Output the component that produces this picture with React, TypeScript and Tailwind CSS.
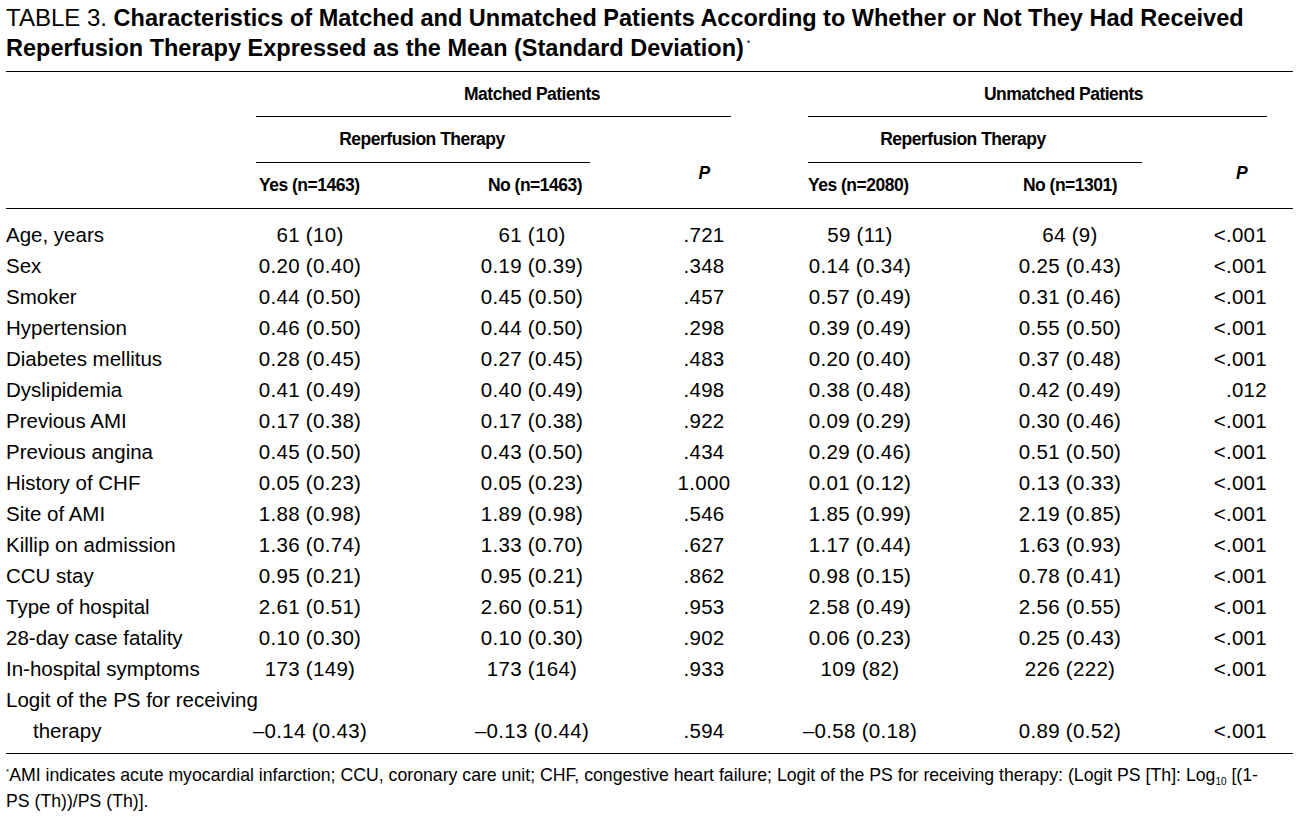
const rows: [string, string, string, string, string, string, string][] = [
  ["Age, years", "61 (10)", "61 (10)", ".721", "59 (11)", "64 (9)", "<.001"],
  ["Sex", "0.20 (0.40)", "0.19 (0.39)", ".348", "0.14 (0.34)", "0.25 (0.43)", "<.001"],
  ["Smoker", "0.44 (0.50)", "0.45 (0.50)", ".457", "0.57 (0.49)", "0.31 (0.46)", "<.001"],
  ["Hypertension", "0.46 (0.50)", "0.44 (0.50)", ".298", "0.39 (0.49)", "0.55 (0.50)", "<.001"],
  ["Diabetes mellitus", "0.28 (0.45)", "0.27 (0.45)", ".483", "0.20 (0.40)", "0.37 (0.48)", "<.001"],
  ["Dyslipidemia", "0.41 (0.49)", "0.40 (0.49)", ".498", "0.38 (0.48)", "0.42 (0.49)", ".012"],
  ["Previous AMI", "0.17 (0.38)", "0.17 (0.38)", ".922", "0.09 (0.29)", "0.30 (0.46)", "<.001"],
  ["Previous angina", "0.45 (0.50)", "0.43 (0.50)", ".434", "0.29 (0.46)", "0.51 (0.50)", "<.001"],
  ["History of CHF", "0.05 (0.23)", "0.05 (0.23)", "1.000", "0.01 (0.12)", "0.13 (0.33)", "<.001"],
  ["Site of AMI", "1.88 (0.98)", "1.89 (0.98)", ".546", "1.85 (0.99)", "2.19 (0.85)", "<.001"],
  ["Killip on admission", "1.36 (0.74)", "1.33 (0.70)", ".627", "1.17 (0.44)", "1.63 (0.93)", "<.001"],
  ["CCU stay", "0.95 (0.21)", "0.95 (0.21)", ".862", "0.98 (0.15)", "0.78 (0.41)", "<.001"],
  ["Type of hospital", "2.61 (0.51)", "2.60 (0.51)", ".953", "2.58 (0.49)", "2.56 (0.55)", "<.001"],
  ["28-day case fatality", "0.10 (0.30)", "0.10 (0.30)", ".902", "0.06 (0.23)", "0.25 (0.43)", "<.001"],
  ["In-hospital symptoms", "173 (149)", "173 (164)", ".933", "109 (82)", "226 (222)", "<.001"],
];

// no condensed face installed, so headers are slightly smaller and tighter
const bold = "font-['Liberation_Sans',Arial,sans-serif] font-bold";
const head = `${bold} text-[17.5px] tracking-[-0.5px]`;
const val = "h-[31px] flex items-center whitespace-nowrap text-[20.5px] tracking-[0.3px]";

function DataRow({ cells, indent }: { cells: string[]; indent?: boolean }) {
  const [label, a, b, p1, c, d, p2] = cells;
  return (
    <>
      <div className={`h-[31px] flex items-center whitespace-nowrap text-[20.5px] ${indent ? "pl-[27px]" : ""}`}>{label}</div>
      <div className={`${val} justify-center pr-[56px]`}>{a}</div>
      <div className={`${val} justify-center pl-[44px]`}>{b}</div>
      <div className={`${val} justify-center`}>{p1}</div>
      <div className={`${val} justify-center pr-[56px]`}>{c}</div>
      <div className={`${val} justify-center pl-[30px]`}>{d}</div>
      <div className={`${val} justify-end pr-[26px]`}>{p2}</div>
    </>
  );
}

export default function App() {
  return (
    <div className="w-[1299px] h-[822px] bg-white text-black px-[6px] font-['Liberation_Sans',Arial,sans-serif] overflow-hidden">
      <div className="pt-[3px] h-[71px] text-[24px] leading-[30px]">
        <span>TABLE 3. </span>
        <span className={`${bold} text-[23.5px]`}>
          Characteristics of Matched and Unmatched Patients According to Whether or Not They Had Received
          Reperfusion Therapy Expressed as the Mean (Standard Deviation)
        </span>
        <span className="relative -top-[10px] ml-[3px] text-[9px]">*</span>
      </div>

      <div className="border-t border-black grid grid-cols-[250px_164px_180px_208px_160px_174px_151px]">
        {/* group headers */}
        <div />
        <div className={`col-span-3 h-[45px] flex flex-col ${head}`}>
          <div className="flex-1 flex items-center justify-center">Matched Patients</div>
          <div className="w-[475px] border-b border-black" />
        </div>
        <div className={`col-span-3 h-[45px] flex flex-col ${head}`}>
          <div className="flex-1 flex items-center justify-center pl-[26px]">Unmatched Patients</div>
          <div className="w-[459px] border-b border-black" />
        </div>

        <div />
        <div className={`col-span-2 h-[46px] flex flex-col ${head}`}>
          <div className="flex-1 flex items-center justify-center pr-[12px]">Reperfusion Therapy</div>
          <div className="w-[334px] border-b border-black" />
        </div>
        <div className={`row-span-2 flex items-center justify-center pt-[21px] ${head} italic`}>P</div>
        <div className={`col-span-2 h-[46px] flex flex-col ${head}`}>
          <div className="flex-1 flex items-center justify-center pr-[24px]">Reperfusion Therapy</div>
          <div className="w-[334px] border-b border-black" />
        </div>
        <div className={`row-span-2 flex items-center justify-center pt-[21px] pl-[48px] ${head} italic`}>P</div>

        <div className="h-[45px]" />
        <div className={`h-[45px] flex items-center pl-[3px] ${head} whitespace-nowrap`}>Yes (n=1463)</div>
        <div className={`h-[45px] flex items-center justify-center pl-[50px] ${head} whitespace-nowrap`}>No (n=1463)</div>
        <div className={`h-[45px] flex items-center ${head} whitespace-nowrap`}>Yes (n=2080)</div>
        <div className={`h-[45px] flex items-center justify-center pl-[30px] ${head} whitespace-nowrap`}>No (n=1301)</div>

        <div className="col-span-7 border-t border-black h-[12px]" />

        {rows.map((r) => (
          <DataRow key={r[0]} cells={r} />
        ))}
        <div className="col-span-7 h-[31px] flex items-center text-[20.5px]">Logit of the PS for receiving</div>
        <DataRow cells={["therapy", "\u20130.14 (0.43)", "\u20130.13 (0.44)", ".594", "\u20130.58 (0.18)", "0.89 (0.52)", "<.001"]} indent />

        <div className="col-span-7 h-[7px] border-b border-black" />
      </div>

      <div className="pt-[10px] text-[17.7px] leading-[22px]">
        <div className="whitespace-nowrap">
          <span className="relative -top-[7px] text-[8px]">*</span>AMI indicates acute myocardial infarction; CCU, coronary care unit; CHF,
          congestive heart failure; Logit of the PS for receiving therapy: (Logit PS [Th]: Log
          <span className="relative top-[4px] text-[10px]">10</span> [(1-
        </div>
        <div className="whitespace-nowrap">PS (Th))/PS (Th)].</div>
      </div>
    </div>
  );
}
